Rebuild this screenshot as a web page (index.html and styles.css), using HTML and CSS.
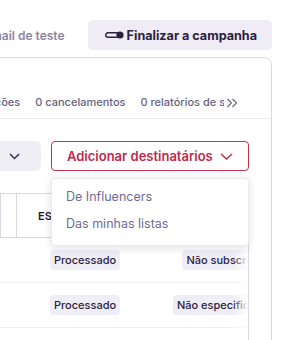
FILE: index.html
```html
<!DOCTYPE html>
<html lang="pt">
<head>
<meta charset="utf-8">
<link rel="stylesheet" href="styles.css">
</head>
<body>
<div class="page">
  <div class="topbar">
    <span class="test-link">Enviar e-mail de teste</span>
    <button class="btn-finish">
      <svg class="toggle" width="19" height="8" viewBox="0 0 19 8"><rect x="0.75" y="1.75" width="13" height="4.5" rx="2.25" fill="none" stroke="currentColor" stroke-width="1.5"/><circle cx="15" cy="4" r="3.6" fill="currentColor"/></svg>
      Finalizar a campanha
    </button>
  </div>
  <div class="card">
    <div class="tabs">
      <div class="tabs-scroll">
        <div class="tabs-list">
          <span class="tab">0 entregas</span>
          <span class="tab">0 aberturas</span>
          <span class="tab">0 rejeições</span>
          <span class="tab">0 cancelamentos</span>
          <span class="tab">0 relatórios de spam</span>
        </div>
      </div>
      <span class="tabs-next">
        <svg width="12" height="10" viewBox="0 0 12 10"><path d="M1.5 1 L5.5 5 L1.5 9 M6.5 1 L10.5 5 L6.5 9" fill="none" stroke="currentColor" stroke-width="1.1"/></svg>
      </span>
    </div>
    <div class="card-body">
      <div class="controls">
        <div class="select">
          <span>Todos os estados</span>
          <svg width="11" height="7" viewBox="0 0 11 7"><path d="M1 1 L5.5 5.5 L10 1" fill="none" stroke="currentColor" stroke-width="1.5"/></svg>
        </div>
        <div class="add-wrap">
          <button class="btn-add">
            Adicionar destinatários
            <svg width="13" height="7" viewBox="0 0 13 7"><path d="M1 1 L6.5 6 L12 1" fill="none" stroke="currentColor" stroke-width="1.5"/></svg>
          </button>
          <div class="menu">
            <div class="menu-item">De Influencers</div>
            <div class="menu-item">Das minhas listas</div>
          </div>
        </div>
      </div>
      <div class="table-wrap">
        <div class="grid">
          <div class="th">Email</div>
          <div class="th"></div>
          <div class="th th-status">Estado do envio</div>
          <div class="th th-center">Subscrição</div>

          <div class="td">ana@exemplo.com</div>
          <div class="td"></div>
          <div class="td td-status"><span class="badge">Processado</span></div>
          <div class="td td-center"><span class="badge">Não subscrito</span></div>

          <div class="td">joao@exemplo.com</div>
          <div class="td"></div>
          <div class="td td-status"><span class="badge">Processado</span></div>
          <div class="td td-center"><span class="badge">Não especificado</span></div>

          <div class="td"></div>
          <div class="td"></div>
          <div class="td"></div>
          <div class="td"></div>
        </div>
        <div class="fade"></div>
      </div>
    </div>
  </div>
</div>
</body>
</html>
```

FILE: styles.css
```css
* { box-sizing: border-box; }
html, body {
  margin: 0;
  padding: 0;
  background: #ffffff;
  overflow: hidden;
}
body {
  font-family: Inter, "Noto Sans", "Liberation Sans", sans-serif;
  color: #2b2140;
  width: 287px;
  height: 340px;
}
.page {
  width: 700px;
  margin-left: -413px;
}
.topbar {
  display: flex;
  justify-content: flex-end;
  align-items: center;
  gap: 23px;
  padding: 20px 15px 0 0;
}
.test-link {
  font-size: 12px;
  font-weight: 600;
  color: #8c86a2;
  white-space: nowrap;
}
.btn-finish {
  display: flex;
  align-items: center;
  gap: 3px;
  height: 30px;
  padding: 0 15px 0 17px;
  border: none;
  border-radius: 5px;
  background: #efecf5;
  color: #2b2140;
  font-family: inherit;
  font-size: 12.6px;
  font-weight: 700;
  white-space: nowrap;
}
.toggle { display: block; }
.card {
  margin: 7px 15px 0 0;
  border: 1px solid #dad6e5;
  border-radius: 8px;
  height: 400px;
  background: #fff;
}
.tabs {
  display: flex;
  align-items: center;
  padding: 36px 33px 8px 0;
  border-bottom: 1px solid #ecebf0;
}
.tabs-scroll {
  flex: 1;
  overflow: hidden;
  display: flex;
  justify-content: flex-end;
}
.tabs-list {
  display: flex;
  gap: 15px;
  margin-right: -24px;
  flex-shrink: 0;
}
.tab {
  font-size: 11px;
  line-height: 16px;
  font-weight: 500;
  color: #68627f;
  white-space: nowrap;
}
.tabs-next {
  display: flex;
  align-items: center;
  color: #68627f;
  padding-top: 1px;
  margin-left: 2px;
}
.card-body {
  padding: 0 22px 0 0;
}
.controls {
  display: flex;
  justify-content: flex-end;
  gap: 10px;
  margin-top: 22px;
}
.select {
  width: 220px;
  height: 30px;
  display: flex;
  align-items: center;
  justify-content: space-between;
  padding: 0 21px 0 12px;
  background: #f0eef5;
  border-radius: 5px;
  color: #3a2d55;
  font-size: 12px;
}
.add-wrap {
  position: relative;
}
.btn-add {
  width: 198px;
  height: 30px;
  display: flex;
  align-items: center;
  gap: 7px;
  padding: 0 15px;
  border: 1px solid #c6304f;
  border-radius: 4px;
  background: #fff;
  color: #c02a4a;
  font-family: inherit;
  font-size: 13px;
  font-weight: 600;
  white-space: nowrap;
}
.menu {
  position: absolute;
  top: 37px;
  left: 0;
  width: 198px;
  padding: 4px 0 8px;
  background: #fff;
  border: 1px solid #ebe9ef;
  border-radius: 4px;
  box-shadow: 0 2px 8px rgba(40, 30, 60, 0.14);
  z-index: 5;
}
.menu-item {
  height: 27px;
  line-height: 27px;
  padding-left: 14px;
  font-size: 12.5px;
  color: #726a93;
}
.table-wrap {
  position: relative;
  margin-top: 22px;
  overflow: hidden;
}
.grid {
  display: grid;
  grid-template-columns: 412px 16px 154px 106px 80px;
  width: 768px;
}
.grid > div:nth-child(4n) { grid-column: 4 / span 2; }
.th {
  height: 45px;
  border-top: 1px solid #dad6e5;
  border-bottom: 1px solid #dad6e5;
  border-left: 1px solid #dad6e5;
  display: flex;
  align-items: center;
  font-size: 11px;
  font-weight: 600;
  text-transform: uppercase;
  color: #1f1830;
  white-space: nowrap;
  padding-left: 12px;
}
.th-status { padding-left: 21px; }
.th-center { padding-left: 12px; }
.td {
  height: 45px;
  border-bottom: 1px solid #efeef2;
  display: flex;
  align-items: center;
  font-size: 11px;
  color: #2b2140;
  white-space: nowrap;
  padding-left: 12px;
}
.td-status { padding-left: 34px; }
.td-center { justify-content: center; padding-left: 0; width: 106px; }
.badge {
  display: inline-block;
  height: 20px;
  line-height: 20px;
  padding: 0 4px;
  border-radius: 4px;
  background: #efedf5;
  font-size: 11px;
  font-weight: 500;
  color: #2d2340;
  white-space: nowrap;
}
.fade {
  position: absolute;
  top: 0;
  right: 0;
  bottom: 0;
  width: 16px;
  background: linear-gradient(to right, rgba(255,255,255,0), #fff);
  border-right: 1px solid #dcd8e7;
}
```
